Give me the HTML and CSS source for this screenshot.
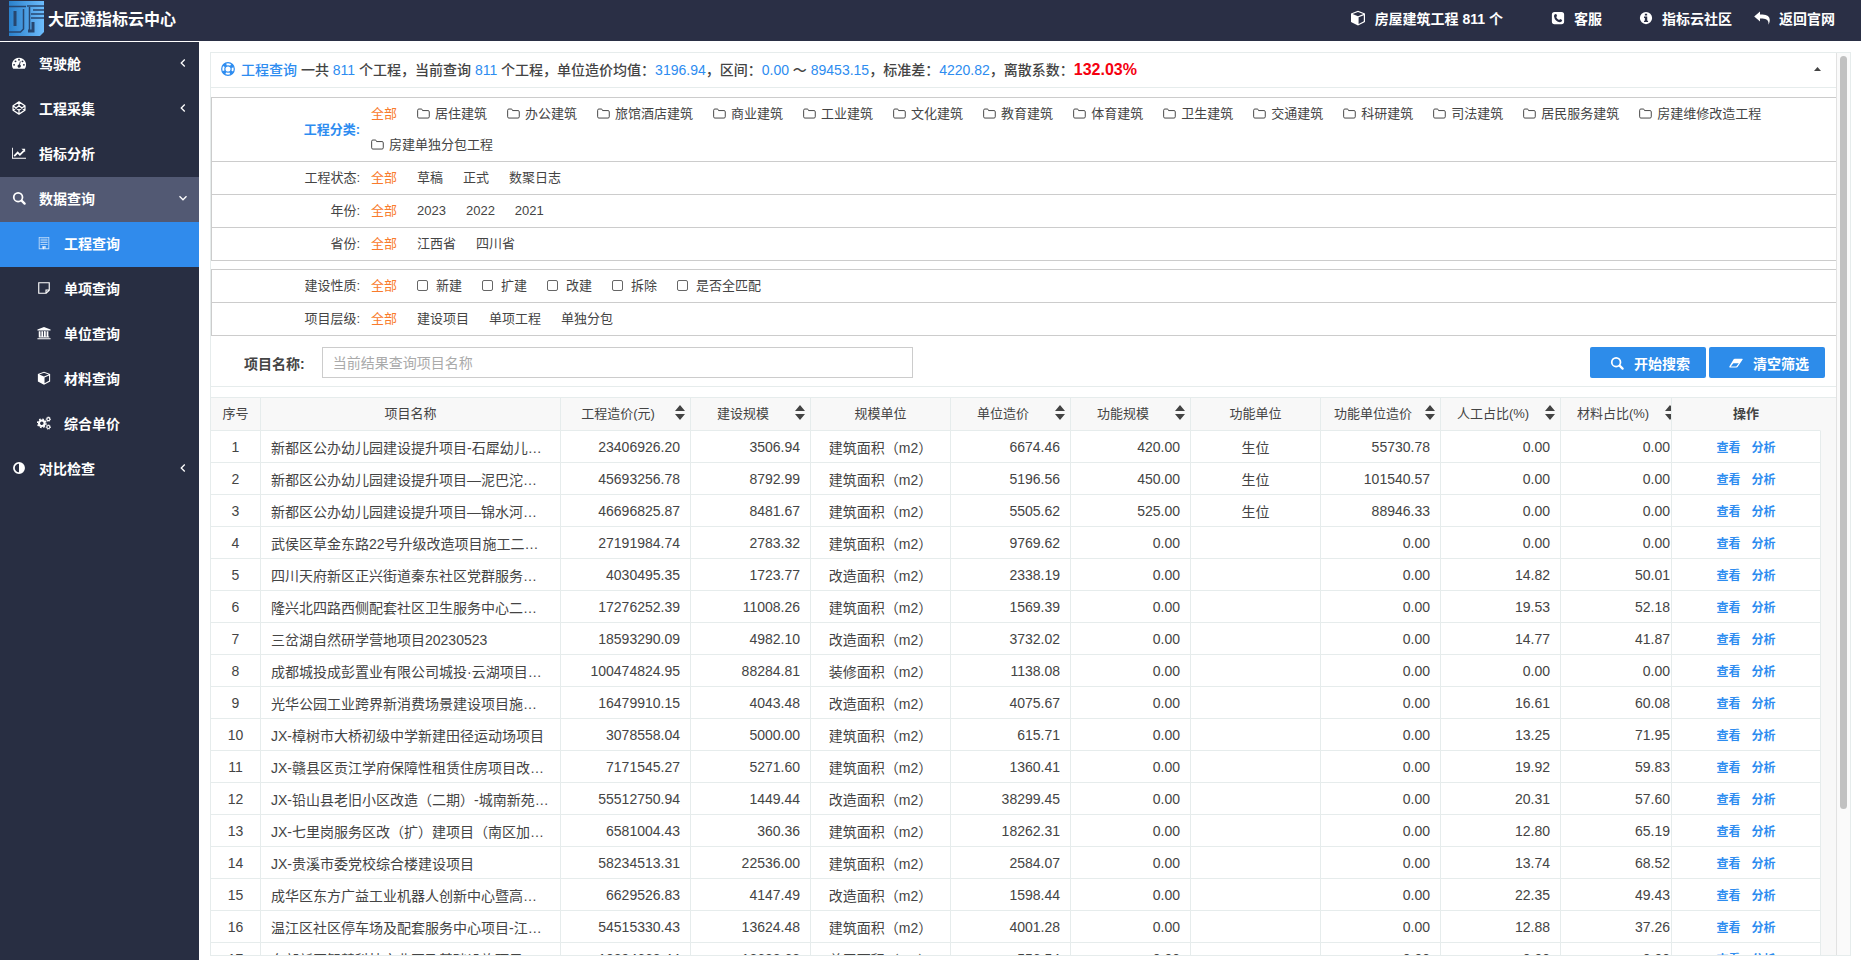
FILE: index.html
```html
<!DOCTYPE html>
<html lang="zh-CN">
<head>
<meta charset="UTF-8" />
<meta name="viewport" content="width=device-width, initial-scale=1" />
<title>大匠通指标云中心</title>
<link rel="stylesheet" href="styles.css">
</head>
<body>
  <!-- icon sprite -->
  <svg class="sprite" aria-hidden="true">
    <symbol id="i-dashboard" viewBox="0 0 16 16"><path fill-rule="evenodd" d="M8 2a8 8 0 0 0-6.800 12.200q.3.5.9.5h11.800q.6 0 .9-.5A8 8 0 0 0 8 2zM8 3.200a1.100 1.100 0 1 1 0 2.200 1.100 1.100 0 0 1 0-2.200zM4 5a1.100 1.100 0 1 1 0 2.200A1.100 1.100 0 0 1 4 5zM2.400 9a1.100 1.100 0 1 1 0 2.200 1.100 1.100 0 0 1 0-2.200zM13.600 9a1.100 1.100 0 1 1 0 2.200 1.100 1.100 0 0 1 0-2.200zM12 5a1.100 1.100 0 1 1 0 2.200A1.100 1.100 0 0 1 12 5zM9 6.200l1 .2-.9 3.400a1.900 1.900 0 1 1-1-.2z"/></symbol>
    <symbol id="i-codepen" viewBox="0 0 16 16"><path fill="none" stroke="currentColor" stroke-width="1.400" stroke-linejoin="round" d="M8 1l6.800 4.500v5L8 15 1.200 10.500v-5zM8 1v4.500M8 15v-4.500M1.200 5.500L8 10.500l6.800-5M1.200 10.500L8 5.500l6.800 5"/></symbol>
    <symbol id="i-chart" viewBox="0 0 16 16"><path d="M0 2h1v11.500h15v1H0z"/><path fill="none" stroke="currentColor" stroke-width="2" d="M2.500 11.500l4-4 2.500 2.500 4.500-4.500"/><path d="M10.800 3h4.200v4.200z"/></symbol>
    <symbol id="i-search" viewBox="0 0 16 16"><path fill="none" stroke="currentColor" stroke-width="2" d="M12 7A5 5 0 1 1 2 7a5 5 0 0 1 10 0z"/><path fill="none" stroke="currentColor" stroke-width="2.600" stroke-linecap="round" d="M11 11l3.400 3.400"/></symbol>
    <symbol id="i-building" viewBox="0 0 16 16"><path fill-rule="evenodd" d="M2 1h12v14H2zm1 1v12h3v-2.500h4V14h3V2z" opacity=".7"/><path d="M4 3h8v1H4zm0 2h8v1H4zm0 2h8v1H4zm0 2h8v1H4zM7 12.500h1V15H7z" opacity=".8"/></symbol>
    <symbol id="i-note" viewBox="0 0 16 16"><path fill="none" stroke="currentColor" stroke-width="1.300" d="M2 2h12v8.500L10.500 14H2zM14 10.300h-3.700V14"/></symbol>
    <symbol id="i-bank" viewBox="0 0 16 16"><path d="M8 1l7.500 3v1H.5V4zM2 6h2v6h1V6h2v6h1V6h1v0h1v6h1V6h2v6h1v1H2zM.5 14h15v1.200H.5z"/><path d="M8 6h1v6H8z"/></symbol>
    <symbol id="i-cube" viewBox="0 0 16 16"><path fill-rule="evenodd" d="M8 .8l7 2.700v8.600L8 15.600l-7-3.500V3.500zM8 2L2.600 4 8 6.200 13.400 4zM8.600 7.300v6.600l5.200-2.700V5.200z"/></symbol>
    <symbol id="i-cogs" viewBox="0 0 16 16"><circle cx="5.500" cy="8.300" r="3.200" fill="none" stroke="currentColor" stroke-width="2.400"/><circle cx="5.500" cy="8.300" r="4.800" fill="none" stroke="currentColor" stroke-width="1.600" stroke-dasharray="1.900 1.870"/><circle cx="13" cy="3.600" r="1.700" fill="none" stroke="currentColor" stroke-width="1.300"/><circle cx="13" cy="3.600" r="2.500" fill="none" stroke="currentColor" stroke-width="1" stroke-dasharray="1.100 .86"/><circle cx="13" cy="12.600" r="1.700" fill="none" stroke="currentColor" stroke-width="1.300"/><circle cx="13" cy="12.600" r="2.500" fill="none" stroke="currentColor" stroke-width="1" stroke-dasharray="1.100 .86"/></symbol>
    <symbol id="i-adjust" viewBox="0 0 16 16"><path fill-rule="evenodd" d="M8 1.200a6.800 6.800 0 1 1 0 13.600A6.800 6.800 0 0 1 8 1.200zM8 3.200a4.800 4.800 0 0 0 0 9.600z"/></symbol>
    <symbol id="i-phone" viewBox="0 0 16 16"><path fill-rule="evenodd" d="M4 1h8q3 0 3 3v8q0 3-3 3H4q-3 0-3-3V4q0-3 3-3zM5.300 3.400Q3.200 4 3.400 6q.5 3 2.400 4.800 1.900 1.800 4.400 2 2 0 2.500-2v-.6L10.500 9l-1.300 1.300Q6.800 9.200 5.900 6.900L7 5.700 6 3.400z"/></symbol>
    <symbol id="i-info" viewBox="0 0 16 16"><path fill-rule="evenodd" d="M8 1a7 7 0 1 1 0 14A7 7 0 0 1 8 1zM6.700 3v2h2.600V3zM5.700 6.400v1.500h1v3.300h-1v1.500h4.700v-1.500h-1V6.400z"/></symbol>
    <symbol id="i-reply" viewBox="0 0 16 16"><path d="M6 1.500v3h2.500Q15.800 4.600 15.800 10q0 2.300-1.200 4.700Q15 8.600 8.500 8.600H6v3L.2 6.500z"/></symbol>
    <symbol id="i-ring" viewBox="0 0 16 16"><circle cx="8" cy="8" r="7.200" fill="none" stroke="currentColor" stroke-width="1.400"/><circle cx="8" cy="8" r="3.600" fill="none" stroke="currentColor" stroke-width="1.400"/><circle cx="8" cy="8" r="5.400" fill="none" stroke="currentColor" stroke-width="3.400" stroke-dasharray="3.600 4.880" stroke-dashoffset="-2.440"/></symbol>
    <symbol id="i-folder" viewBox="0 0 16 16"><path fill="none" stroke="currentColor" stroke-width="1.200" d="M.8 4q0-1.500 1.500-1.500h3q1 0 1.200 1l.3.900h6.700q1.600 0 1.600 1.500v6.200q0 1.500-1.600 1.500H2.300q-1.500 0-1.500-1.500z"/></symbol>
    <symbol id="i-eraser" viewBox="0 0 16 16"><path fill-rule="evenodd" d="M6.500 3H15q1 0 .6 1L10 12.200q-.5.800-1.500.8H1q-1 0-.6-1L5.300 3.800Q5.800 3 6.500 3zM5 8.200L2 12h6.300l2.900-3.800z"/></symbol>
    <symbol id="i-left" viewBox="0 0 16 16"><path fill="none" stroke="currentColor" stroke-width="1.500" d="M10 4L6 8l4 4"/></symbol>
    <symbol id="i-down" viewBox="0 0 16 16"><path fill="none" stroke="currentColor" stroke-width="1.500" d="M4 6l4 4 4-4"/></symbol>
    <symbol id="i-logo" viewBox="0 0 35 35">
      <path fill="url(#logo-fill)" d="M0 0h35v31l-4 4H0z"/>
      <path fill="none" stroke="#27466f" stroke-width="1.500" d="M0 5.500h17M0 31h11.500l3-3V8M20.500 6v24M18 5h17M24 9h11M22 13h13M22 17h13"/>
      <path fill="none" stroke="#27466f" stroke-width="3" d="M6 10v15M19 30h5v-9"/>
    </symbol>
    <linearGradient id="logo-fill"><stop offset="0" stop-color="#2a80cb"/><stop offset="1" stop-color="#6dbcfc"/></linearGradient>
  </svg>

  <header class="topbar">
    <a class="brand" href="#"><svg class="logo"><use href="#i-logo"/></svg>大匠通指标云中心</a>
    <nav class="top-links" aria-label="快捷入口">
      <a class="count" href="#"><svg class="icon icon-lg"><use href="#i-cube"/></svg>房屋建筑工程 811 个</a>
      <a class="service" href="#"><svg class="icon"><use href="#i-phone"/></svg>客服</a>
      <a href="#"><svg class="icon"><use href="#i-info"/></svg>指标云社区</a>
      <a href="#"><svg class="icon icon-lg"><use href="#i-reply"/></svg>返回官网</a>
    </nav>
  </header>

  <div class="layout">
    <nav class="sidebar" aria-label="主菜单">
      <a href="#"><svg class="icon"><use href="#i-dashboard"/></svg>驾驶舱<svg class="arrow"><use href="#i-left"/></svg></a>
      <a href="#"><svg class="icon"><use href="#i-codepen"/></svg>工程采集<svg class="arrow"><use href="#i-left"/></svg></a>
      <a href="#"><svg class="icon"><use href="#i-chart"/></svg>指标分析</a>
      <a class="open" href="#"><svg class="icon"><use href="#i-search"/></svg>数据查询<svg class="arrow"><use href="#i-down"/></svg></a>
      <a class="sub active" href="#"><svg class="icon"><use href="#i-building"/></svg>工程查询</a>
      <a class="sub" href="#"><svg class="icon"><use href="#i-note"/></svg>单项查询</a>
      <a class="sub" href="#"><svg class="icon"><use href="#i-bank"/></svg>单位查询</a>
      <a class="sub" href="#"><svg class="icon"><use href="#i-cube"/></svg>材料查询</a>
      <a class="sub" href="#"><svg class="icon"><use href="#i-cogs"/></svg>综合单价</a>
      <a href="#"><svg class="icon"><use href="#i-adjust"/></svg>对比检查<svg class="arrow"><use href="#i-left"/></svg></a>
    </nav>

    <main class="panel">
      <div class="content">
        <div class="summary">
          <svg class="icon"><use href="#i-ring"/></svg>
          <p><b>工程查询</b> 一共 <b>811</b> 个工程，当前查询 <b>811</b> 个工程，单位造价均值：<b>3196.94</b>，区间：<b>0.00</b> ～ <b>89453.15</b>，标准差：<b>4220.82</b>，离散系数：<strong>132.03%</strong></p>
          <button class="collapse" type="button" aria-label="收起"></button>
        </div>

        <div class="filters">
          <div class="filter-row">
            <span class="filter-label current">工程分类:</span>
            <div class="options" id="categories"><a class="all" href="#">全部</a></div>
          </div>
          <div class="filter-row">
            <span class="filter-label">工程状态:</span>
            <div class="options"><a class="all" href="#">全部</a><a href="#">草稿</a><a href="#">正式</a><a href="#">数聚日志</a></div>
          </div>
          <div class="filter-row">
            <span class="filter-label">年份:</span>
            <div class="options"><a class="all" href="#">全部</a><a href="#">2023</a><a href="#">2022</a><a href="#">2021</a></div>
          </div>
          <div class="filter-row">
            <span class="filter-label">省份:</span>
            <div class="options"><a class="all" href="#">全部</a><a href="#">江西省</a><a href="#">四川省</a></div>
          </div>
        </div>

        <div class="filters">
          <div class="filter-row">
            <span class="filter-label">建设性质:</span>
            <div class="options">
              <a class="all" href="#">全部</a>
              <label><input type="checkbox">新建</label>
              <label><input type="checkbox">扩建</label>
              <label><input type="checkbox">改建</label>
              <label><input type="checkbox">拆除</label>
              <label><input type="checkbox">是否全匹配</label>
            </div>
          </div>
          <div class="filter-row">
            <span class="filter-label">项目层级:</span>
            <div class="options"><a class="all" href="#">全部</a><a href="#">建设项目</a><a href="#">单项工程</a><a href="#">单独分包</a></div>
          </div>
        </div>

        <form class="search" id="search-form">
          <label for="project-name">项目名称:</label>
          <input id="project-name" type="text" placeholder="当前结果查询项目名称" autocomplete="off">
          <div class="buttons">
            <button type="submit"><svg class="icon"><use href="#i-search"/></svg>开始搜索</button>
            <button type="reset"><svg class="icon"><use href="#i-eraser"/></svg>清空筛选</button>
          </div>
        </form>

        <div class="grid">
          <div class="grid-scroll">
            <table>
              <colgroup>
                <col class="w50"><col class="w300"><col class="w130"><col class="w120"><col class="w140"><col class="w120"><col class="w120"><col class="w130"><col class="w120"><col class="w120"><col class="w120"><col class="w150">
              </colgroup>
              <thead>
                <tr>
                  <th>序号</th>
                  <th>项目名称</th>
                  <th class="sortable">工程造价(元)</th>
                  <th class="sortable">建设规模</th>
                  <th>规模单位</th>
                  <th class="sortable">单位造价</th>
                  <th class="sortable">功能规模</th>
                  <th>功能单位</th>
                  <th class="sortable">功能单位造价</th>
                  <th class="sortable">人工占比(%)</th>
                  <th class="sortable">材料占比(%)</th>
                  <th class="fixed">操作</th>
                </tr>
              </thead>
              <tbody id="rows"></tbody>
            </table>
          </div>
          <div class="gutter"></div>
        </div>
      </div>
      <div class="scrollbar"><div class="thumb"></div></div>
    </main>
  </div>

<script>
  (() => {
    const categories = ['居住建筑', '办公建筑', '旅馆酒店建筑', '商业建筑', '工业建筑', '文化建筑', '教育建筑', '体育建筑', '卫生建筑', '交通建筑', '科研建筑', '司法建筑', '居民服务建筑', '房建维修改造工程', '房建单独分包工程'];

    // name, cost, scale, scale unit, unit cost, function scale, function unit, function unit cost, labour %, material %
    const projects = [
      ['新都区公办幼儿园建设提升项目-石犀幼儿…', '23406926.20', '3506.94', '建筑面积（m2）', '6674.46', '420.00', '生位', '55730.78', '0.00', '0.00'],
      ['新都区公办幼儿园建设提升项目—泥巴沱…', '45693256.78', '8792.99', '建筑面积（m2）', '5196.56', '450.00', '生位', '101540.57', '0.00', '0.00'],
      ['新都区公办幼儿园建设提升项目—锦水河…', '46696825.87', '8481.67', '建筑面积（m2）', '5505.62', '525.00', '生位', '88946.33', '0.00', '0.00'],
      ['武侯区草金东路22号升级改造项目施工二…', '27191984.74', '2783.32', '建筑面积（m2）', '9769.62', '0.00', '', '0.00', '0.00', '0.00'],
      ['四川天府新区正兴街道秦东社区党群服务…', '4030495.35', '1723.77', '改造面积（m2）', '2338.19', '0.00', '', '0.00', '14.82', '50.01'],
      ['隆兴北四路西侧配套社区卫生服务中心二…', '17276252.39', '11008.26', '建筑面积（m2）', '1569.39', '0.00', '', '0.00', '19.53', '52.18'],
      ['三岔湖自然研学营地项目20230523', '18593290.09', '4982.10', '改造面积（m2）', '3732.02', '0.00', '', '0.00', '14.77', '41.87'],
      ['成都城投成彭置业有限公司城投·云湖项目…', '100474824.95', '88284.81', '装修面积（m2）', '1138.08', '0.00', '', '0.00', '0.00', '0.00'],
      ['光华公园工业跨界新消费场景建设项目施…', '16479910.15', '4043.48', '改造面积（m2）', '4075.67', '0.00', '', '0.00', '16.61', '60.08'],
      ['JX-樟树市大桥初级中学新建田径运动场项目', '3078558.04', '5000.00', '建筑面积（m2）', '615.71', '0.00', '', '0.00', '13.25', '71.95'],
      ['JX-赣县区贡江学府保障性租赁住房项目改…', '7171545.27', '5271.60', '建筑面积（m2）', '1360.41', '0.00', '', '0.00', '19.92', '59.83'],
      ['JX-铅山县老旧小区改造（二期）-城南新苑…', '55512750.94', '1449.44', '改造面积（m2）', '38299.45', '0.00', '', '0.00', '20.31', '57.60'],
      ['JX-七里岗服务区改（扩）建项目（南区加…', '6581004.43', '360.36', '建筑面积（m2）', '18262.31', '0.00', '', '0.00', '12.80', '65.19'],
      ['JX-贵溪市委党校综合楼建设项目', '58234513.31', '22536.00', '建筑面积（m2）', '2584.07', '0.00', '', '0.00', '13.74', '68.52'],
      ['成华区东方广益工业机器人创新中心暨高…', '6629526.83', '4147.49', '改造面积（m2）', '1598.44', '0.00', '', '0.00', '22.35', '49.43'],
      ['温江区社区停车场及配套服务中心项目-江…', '54515330.43', '13624.48', '建筑面积（m2）', '4001.28', '0.00', '', '0.00', '12.88', '37.26'],
      ['东部新区智慧科技产业园及基础设施项目', '10394663.44', '18682.68', '总平面积（m2）', '556.54', '0.00', '', '0.00', '0.00', '0.00'],
    ];

    // Alignment of each project column
    const align = ['', 'num', 'num', 'mid', 'num', 'num', 'mid', 'num', 'num', 'num'];

    document.getElementById('categories').insertAdjacentHTML('beforeend', categories
      .map(name => `<a href="#"><svg class="icon"><use href="#i-folder"/></svg>${name}</a>`)
      .join(''));

    document.getElementById('rows').innerHTML = projects.map((project, i) => `
      <tr>
        <td class="mid">${i + 1}</td>
        ${project.map((value, c) => `<td class="${align[c]}">${value}</td>`).join('')}
        <td class="fixed"><a href="#">查看</a><a href="#">分析</a></td>
      </tr>`).join('');

    document.querySelectorAll('.sortable').forEach(th => {
      th.innerHTML = `<div class="sort-head"><span>${th.textContent}</span><i class="sort"></i></div>`;
    });

    document.getElementById('search-form').addEventListener('submit', e => e.preventDefault());
  })();
</script>
</body>
</html>
```
FILE: styles.css
```css
* {
  box-sizing: border-box;
}

body {
  margin: 0;
  height: 100vh;
  display: flex;
  flex-direction: column;
  overflow: hidden;
  background: #fff;
  color: #444;
  font-family: "Liberation Sans", "Noto Sans CJK SC", sans-serif;
  font-size: 14px;
}

a {
  color: inherit;
  text-decoration: none;
}

button, input {
  font: inherit;
}

.sprite {
  position: absolute;
  width: 0;
  height: 0;
}

.icon {
  width: 14px;
  height: 14px;
  flex: none;
  fill: currentColor;
}

.icon-lg {
  width: 16px;
  height: 16px;
}

/* Top bar */
.topbar {
  flex: none;
  display: flex;
  justify-content: space-between;
  height: 41px;
  padding: 0 26px 5px 9px;
  background: #2a2f45;
  color: #fff;
  font-weight: bold;
}

.brand {
  display: flex;
  align-items: center;
  gap: 4px;
  font-size: 16px;
}

.logo {
  width: 35px;
  height: 35px;
}

.top-links {
  display: flex;
  gap: 22px;
}

.top-links a {
  display: flex;
  align-items: center;
  gap: 9px;
}

.top-links .count {
  margin-right: 26px;
}

.top-links .service {
  margin-right: 15px;
}

.layout {
  flex: 1;
  display: flex;
  min-height: 0;
}

/* Sidebar */
.sidebar {
  flex: none;
  width: 199px;
  margin-top: 1px;
  background: #282e42;
  color: #fff;
  font-weight: bold;
}

.sidebar a {
  display: flex;
  align-items: center;
  gap: 13px;
  height: 45px;
  padding: 0 9px 3px 12px;
}

.sidebar .open {
  background: #525973;
}

.sidebar .sub {
  padding-left: 37px;
}

.sidebar .active {
  background: #308bec;
}

.arrow {
  width: 14px;
  height: 14px;
  margin-left: auto;
}

/* Panel */
.panel {
  flex: 1;
  display: flex;
  min-width: 0;
  margin: 11px 10px 4px 11px;
  border: 1px solid #e6ecec;
}

.content {
  flex: 1;
  min-width: 0;
  display: flex;
  flex-direction: column;
}

.scrollbar {
  flex: none;
  width: 14px;
  padding: 3px;
  background: #fafafa;
  border-left: 1px solid #e2e2e2;
}

.thumb {
  width: 7px;
  height: 84%;
  border-radius: 4px;
  background: #c1c1c1;
}

.summary {
  flex: none;
  display: flex;
  align-items: center;
  height: 35px;
  margin-bottom: 9px;
  padding: 0 15px 2px 10px;
  gap: 6px;
  border-bottom: 1px solid #e6ecec;
  font-weight: 500;
}

.summary p {
  flex: 1;
  margin: 0;
}

.summary .icon {
  color: #2d8cf0;
}

.summary b {
  color: #2d8cf0;
  font-weight: 500;
}

.summary strong {
  color: #f5000f;
  font-size: 16px;
}

.collapse {
  width: 7px;
  height: 4px;
  padding: 0;
  border: 0;
  background: #444;
  clip-path: polygon(50% 0, 100% 100%, 0 100%);
}

/* Filters */
.filters {
  flex: none;
  margin-bottom: 8px;
  border: 1px solid #ccc;
  border-right: 0;
  font-size: 13px;
}

.filter-row {
  display: grid;
  grid-template-columns: 148px 1fr;
  column-gap: 11px;
  align-items: center;
  line-height: 31px;
  padding-bottom: 1px;
}

.filter-row + .filter-row {
  border-top: 1px solid #ccc;
}

.filter-label {
  text-align: right;
}

.filter-label.current {
  color: #2d8cf0;
  font-weight: bold;
}

.options {
  display: flex;
  flex-wrap: wrap;
  column-gap: 20px;
}

.options a, .options label {
  display: flex;
  align-items: center;
  gap: 5px;
}

.options label {
  gap: 8px;
}

.options .icon {
  width: 13px;
  height: 13px;
}

.options .all {
  color: #f97b2c;
}

.options input {
  appearance: none;
  width: 11px;
  height: 11px;
  margin: 0;
  border: 1px solid #666;
  border-radius: 2px;
  background: #fff;
}

.options input:checked {
  background: #2d8cf0;
}

/* Search */
.search {
  flex: none;
  display: flex;
  align-items: center;
  height: 43px;
  margin-bottom: 10px;
  padding: 0 11px 5px 33px;
  border-bottom: 1px solid #e6ecec;
}

.search label {
  margin-right: 17px;
  font-weight: bold;
}

.search input {
  flex: 0 1 591px;
  height: 31px;
  padding: 0 10px;
  border: 1px solid #ccc;
  background: #fff;
}

.search input::placeholder {
  color: #aaa;
}

.buttons {
  display: flex;
  gap: 3px;
  margin-left: auto;
}

.buttons button {
  display: flex;
  align-items: center;
  justify-content: center;
  gap: 10px;
  width: 116px;
  height: 31px;
  padding: 0 0 0 4px;
  border: 0;
  border-radius: 2px;
  background: #2d8cea;
  color: #fff;
  font-weight: bold;
  cursor: pointer;
}

.buttons button:hover {
  background: #57a3f3;
}

/* Table */
.grid {
  flex: 1;
  display: flex;
  min-height: 0;
  border-top: 1px solid #e6ecec;
}

.grid-scroll {
  flex: 1;
  overflow: hidden;
}

.gutter {
  flex: none;
  width: 15px;
  background: #f8f8f8;
}

table {
  width: 100%;
  min-width: 1620px;
  table-layout: fixed;
  border-collapse: separate;
  border-spacing: 0;
}

.w50 { width: 50px; }
.w120 { width: 120px; }
.w130 { width: 130px; }
.w140 { width: 140px; }
.w150 { width: 150px; }
.w300 { width: 300px; }

th, td {
  padding: 0 10px;
  border-right: 1px solid #e6ecec;
  border-bottom: 1px solid #e6ecec;
  white-space: nowrap;
}

th {
  height: 33px;
  padding: 0 0 3px;
  background: #f8f8f8;
  font-size: 13px;
  font-weight: normal;
}

td {
  height: 32px;
  background: #fff;
}

tbody tr:hover td {
  background: #f7fbff;
}

.num {
  text-align: right;
}

.mid {
  padding: 0;
  text-align: center;
}

.sort-head {
  display: flex;
  align-items: center;
  padding-right: 5px;
}

.sort-head span {
  flex: 1;
}

.sort {
  width: 10px;
  height: 15px;
  background: #444;
  clip-path: polygon(50% 0, 100% 40%, 0 40%, 0 60%, 100% 60%, 50% 100%, 0 60%, 0 40%);
}

/* Actions column stays in view when the table is wider than the panel */
.fixed {
  position: sticky;
  right: 0;
  border-left: 1px solid #e6ecec;
  text-align: center;
}

th.fixed {
  border-right-color: #f8f8f8;
  font-weight: bold;
}

td.fixed {
  color: #2d8cf0;
  font-size: 12px;
  font-weight: bold;
}

td.fixed a + a {
  margin-left: 11px;
}
```
